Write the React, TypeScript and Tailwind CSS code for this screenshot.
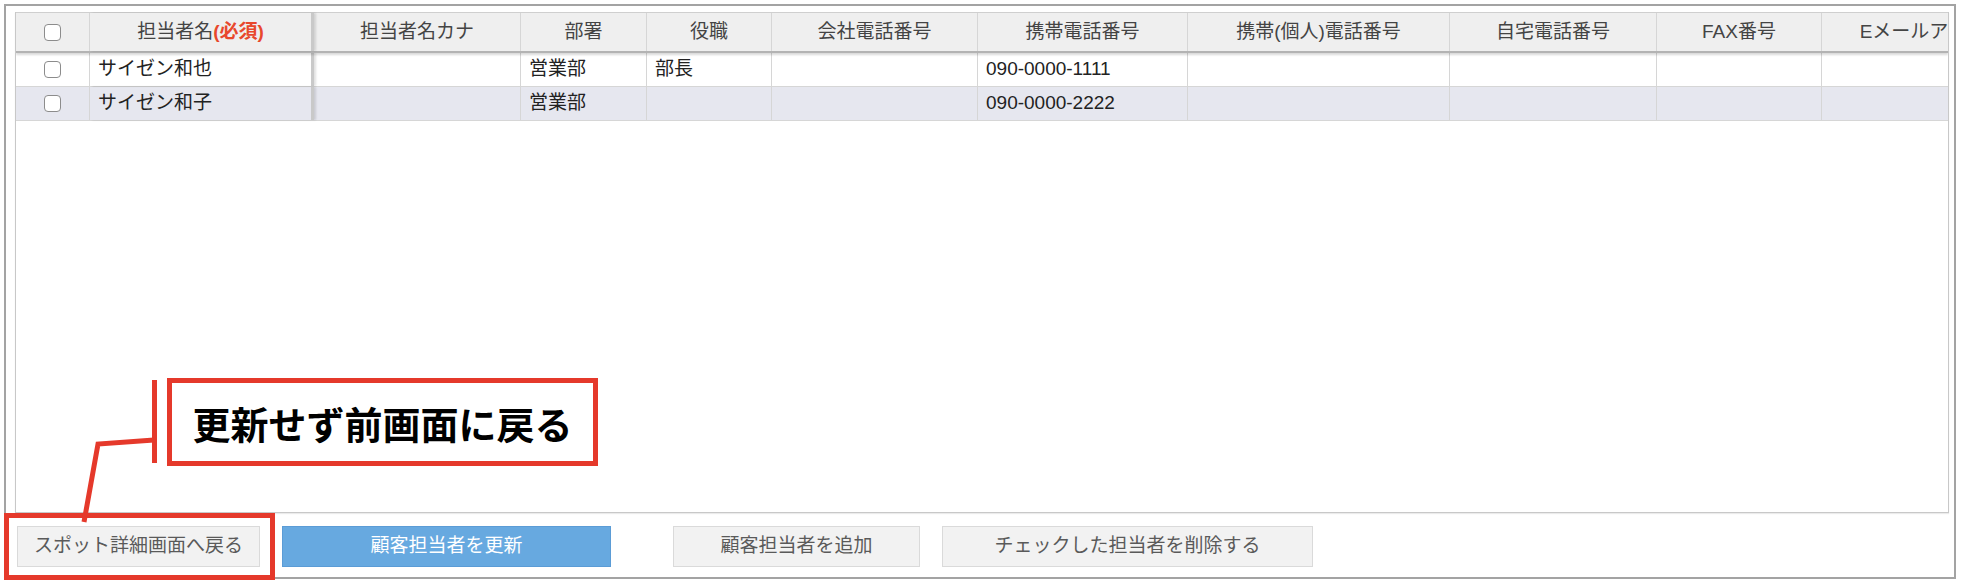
import React from 'react';

type Column = { label: React.ReactNode; width: number };

const columns: Column[] = [
  { label: 'checkbox', width: 74 },
  {
    label: (
      <>
        担当者名<span className="font-bold text-[#e8482c]">(必須)</span>
      </>
    ),
    width: 224,
  },
  { label: '担当者名カナ', width: 207 },
  { label: '部署', width: 126 },
  { label: '役職', width: 125 },
  { label: '会社電話番号', width: 206 },
  { label: '携帯電話番号', width: 210 },
  { label: '携帯(個人)電話番号', width: 262 },
  { label: '自宅電話番号', width: 207 },
  { label: 'FAX番号', width: 165 },
  { label: 'Eメールアドレス', width: 222 },
];

const contacts = [
  { name: 'サイゼン和也', dept: '営業部', title: '部長', mobile: '090-0000-1111' },
  { name: 'サイゼン和子', dept: '営業部', title: '', mobile: '090-0000-2222' },
];

const font = { fontFamily: '"Liberation Sans", "Noto Sans CJK JP", sans-serif' };

function Box() {
  return <span className="block h-[17px] w-[17px] rounded-[4px] border border-[#8c8c8c] bg-white" />;
}

function Cell({ index, children, header }: { index: number; children?: React.ReactNode; header?: boolean }) {
  const col = columns[index];
  const frozen = index === 1;
  return (
    <div
      style={{ width: col.width }}
      className={
        'flex h-full shrink-0 items-center overflow-hidden whitespace-nowrap ' +
        (index === 0 ? 'justify-center ' : header ? 'justify-center ' : 'px-[8px] ') +
        (frozen
          ? 'relative z-10 border-r-[3px] border-r-[#c9c9c9] shadow-[2px_0_2px_rgba(0,0,0,0.12)] '
          : 'border-r border-r-[#d6d6d6] ')
      }
    >
      {children}
    </div>
  );
}

function Button({ children, primary, className }: { children: React.ReactNode; primary?: boolean; className: string }) {
  return (
    <button
      className={
        'flex h-[41px] items-center justify-center border text-[19px] ' +
        (primary ? 'border-[#5b9cd6] bg-[#67a9e0] text-white ' : 'border-[#dadada] bg-[#f2f2f2] text-[#5a5a5a] ') +
        className
      }
    >
      {children}
    </button>
  );
}

export default function App() {
  return (
    <div className="relative h-[586px] w-[1962px] bg-white p-[4px]" style={font}>
      <div className="flex h-[575px] w-[1952px] flex-col border-2 border-[#a3a3a3]">
        {/* grid area */}
        <div className="ml-[9px] mr-[5px] mt-[6px] h-[501px] overflow-hidden border-x border-b border-[#c8c8c8] shadow-[0_1px_1px_rgba(0,0,0,0.08)]">
          <div className="relative z-20 flex h-[41px] border-t border-b-2 border-t-[#cfcfcf] border-b-[#b3b3b3] bg-[#efefef] text-[19px] text-[#444] shadow-[0_2px_2px_rgba(0,0,0,0.15)]">
            {columns.map((c, i) => (
              <Cell key={i} index={i} header>
                {i === 0 ? <Box /> : c.label}
              </Cell>
            ))}
          </div>
          {contacts.map((p, r) => (
            <div
              key={p.name}
              className={
                'flex h-[34px] border-b border-[#d6d6d6] text-[19px] text-[#222] ' +
                (r % 2 ? 'bg-[#e6e7ef]' : 'bg-white')
              }
            >
              {columns.map((_, i) => (
                <Cell key={i} index={i}>
                  {i === 0 && <Box />}
                  {i === 1 && p.name}
                  {i === 3 && p.dept}
                  {i === 4 && p.title}
                  {i === 6 && p.mobile}
                </Cell>
              ))}
            </div>
          ))}
        </div>

        {/* actions */}
        <div className="flex items-center pl-[11px] pt-[13px]">
          <Button className="w-[243px]">スポット詳細画面へ戻る</Button>
          <Button primary className="ml-[22px] w-[329px]">顧客担当者を更新</Button>
          <Button className="ml-[62px] w-[247px]">顧客担当者を追加</Button>
          <Button className="ml-[22px] w-[371px]">チェックした担当者を削除する</Button>
        </div>
      </div>

      {/* callout */}
      <div className="absolute left-[4px] top-[513px] h-[67px] w-[271px] border-[5px] border-[#e5392b]" />
      <div className="absolute left-[167px] top-[378px] flex h-[88px] w-[431px] items-center justify-center border-[5px] border-[#e5392b] bg-white">
        <span className="text-[38px] font-bold text-black" style={{ fontFamily: '"Noto Sans CJK JP", sans-serif' }}>
          更新せず前画面に戻る
        </span>
      </div>
      <svg className="pointer-events-none absolute left-0 top-0" width="1962" height="586">
        <line x1="154.5" y1="380" x2="154.5" y2="463" stroke="#e5392b" strokeWidth="5" />
        <polyline points="154,440 98,444 84,522" fill="none" stroke="#e5392b" strokeWidth="5" />
      </svg>
    </div>
  );
}
